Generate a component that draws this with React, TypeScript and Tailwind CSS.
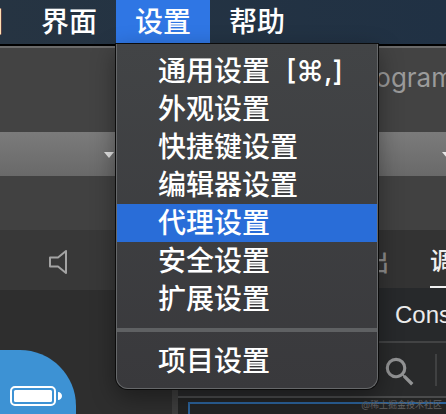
import React, { useState } from 'react';
import { MdSearch } from 'react-icons/md';

const menus = ['视图', '界面', '设置', '帮助'];

const settingsItems = [
  { label: '通用设置', shortcut: '[⌘,]' },
  { label: '外观设置' },
  { label: '快捷键设置' },
  { label: '编辑器设置' },
  { label: '代理设置' },
  { label: '安全设置' },
  { label: '扩展设置' },
];

const SettingsMenu: React.FC = () => {
  const [active, setActive] = useState('代理设置');

  const itemClass = (label: string) =>
    `flex h-[38px] w-full items-center gap-4 pl-[41px] text-left whitespace-nowrap ${
      active === label ? 'bg-[#296dd8]' : ''
    }`;

  return (
    <div
      role="menu"
      className="absolute top-full left-0 z-20 w-[262px] rounded-b-xl border-x border-b border-[#66686a] bg-linear-to-b from-[#424446] to-[#39393c] py-2 shadow-[0_0_0_1px_#0c0c0c,0_8px_24px_rgba(0,0,0,0.4)]"
    >
      {settingsItems.map((item) => (
        <button
          key={item.label}
          role="menuitem"
          className={itemClass(item.label)}
          onMouseEnter={() => setActive(item.label)}
        >
          {item.label}
          {item.shortcut && <span>{item.shortcut}</span>}
        </button>
      ))}
      <div role="separator" className="my-[10px] h-1 bg-[#5f6163]" />
      <button role="menuitem" className={itemClass('项目设置')} onMouseEnter={() => setActive('项目设置')}>
        项目设置
      </button>
    </div>
  );
};

const MenuBar: React.FC = () => {
  const [open, setOpen] = useState('设置');

  return (
    <nav className="relative z-10 flex h-11 bg-linear-to-r from-[#263442] to-[#203144] text-[28px] font-medium text-white">
      <div className="-ml-18 flex">
        {menus.map((menu) => (
          <div key={menu} className="relative">
            <button
              className={`h-11 px-[19px] whitespace-nowrap ${open === menu ? 'bg-[#2f76e4]' : ''}`}
              onClick={() => setOpen(menu)}
            >
              {menu}
            </button>
            {menu === '设置' && open === menu && <SettingsMenu />}
          </div>
        ))}
      </div>
    </nav>
  );
};

const Picker: React.FC<{ label: string; className: string }> = ({ label, className }) => (
  <div className={`relative h-11 ${className}`}>
    <select
      aria-label={label}
      className="h-full w-full appearance-none bg-linear-to-b from-[#7b7b7b] to-[#696969]"
    />
    <svg viewBox="0 0 10 6" className="pointer-events-none absolute top-5 right-[10px] h-[6px] w-[10px]">
      <path d="M0 0h10L5 6z" fill="#e6e6e6" />
    </svg>
  </div>
);

const SpeakerIcon: React.FC = () => (
  <svg viewBox="0 0 20 26" className="h-[26px] w-5" fill="none" stroke="#a3a3a3" strokeWidth="2">
    <path d="M2 8.500h8L18 2v22l-8-6.500H2z" strokeLinejoin="round" />
  </svg>
);

const BatteryIcon: React.FC = () => (
  <svg viewBox="0 0 52 20" className="h-5 w-[52px]">
    <rect x="1" y="1" width="44" height="18" rx="4" fill="none" stroke="#fff" strokeWidth="2" />
    <rect x="4" y="4" width="38" height="12" rx="1.5" fill="#fff" />
    <path d="M48 6c2.4 0 4 1.8 4 4s-1.600 4-4 4z" fill="#fff" />
  </svg>
);

const Simulator: React.FC = () => (
  <section className="flex w-[172px] shrink-0 flex-col bg-[#2e2e2e]">
    <div className="flex h-15 items-center bg-[#383838] pt-1 pl-12">
      <button aria-label="声音">
        <SpeakerIcon />
      </button>
    </div>
    <div className="mt-auto h-16 w-[76px] rounded-tr-[56px] bg-[#3d92d4] pt-9 pl-[10px]">
      <BatteryIcon />
    </div>
  </section>
);

const DevTools: React.FC = () => (
  <section className="flex min-w-0 flex-1 flex-col overflow-hidden bg-[#232424]">
    <div className="flex h-[58px] shrink-0 gap-[41px] bg-[#333333] pl-[163px] text-2xl font-medium whitespace-nowrap">
      <button className="pt-2 text-[#8d8d8d]">输出</button>
      <button className="border-b-2 border-[#f0f0f0] pt-2 text-[#f0f0f0]">调试器</button>
    </div>
    <div className="flex h-[55px] shrink-0 items-center border-b-2 border-[#424344] bg-[#27292b] pl-[217px] text-2xl text-[#ececec]">
      <button className="font-['Liberation_Sans']">Console</button>
    </div>
    <div className="flex h-[55px] shrink-0 items-center border-b-2 border-[#4a4b4c] bg-[#292a2b] pl-[203px]">
      <button aria-label="搜索" className="shrink-0 pt-1">
        <MdSearch className="text-[38px] text-[#929394]" />
      </button>
      <div className="ml-4 h-8 w-[2px] shrink-0 bg-[#404142]" />
    </div>
    <div className="relative flex flex-1 pt-1 pl-[10px]">
      <div className="flex-1 border-t-2 border-l-2 border-[#2c639b]" />
      <span className="absolute right-1 bottom-0 text-[9px] leading-[18px] text-[#636363]">@稀土掘金技术社区</span>
    </div>
  </section>
);

const App: React.FC = () => {
  return (
    <div className="flex h-screen min-h-[414px] flex-col overflow-hidden bg-[#414141] font-['Inter','Noto_Sans_CJK_SC',sans-serif]">
      <MenuBar />
      <header className="h-22 shrink-0 overflow-hidden border-t-2 border-black bg-[#434343]">
        <h1 className="-mr-[8px] flex h-full items-center justify-end border-t-2 border-[#6a6a6a] pb-[26px] text-[26px] text-[#9b9b9b]">
          ogram
        </h1>
      </header>
      <div className="flex">
        <Picker label="模式" className="w-31 shrink-0" />
        <Picker label="编译" className="-mr-4 flex-1" />
      </div>
      <div className="h-[54px] shrink-0 bg-[#414141]" />
      <main className="flex flex-1">
        <Simulator />
        <div className="w-[6px] bg-[#3e3e3e]" />
        <DevTools />
      </main>
    </div>
  );
};

export default App;
